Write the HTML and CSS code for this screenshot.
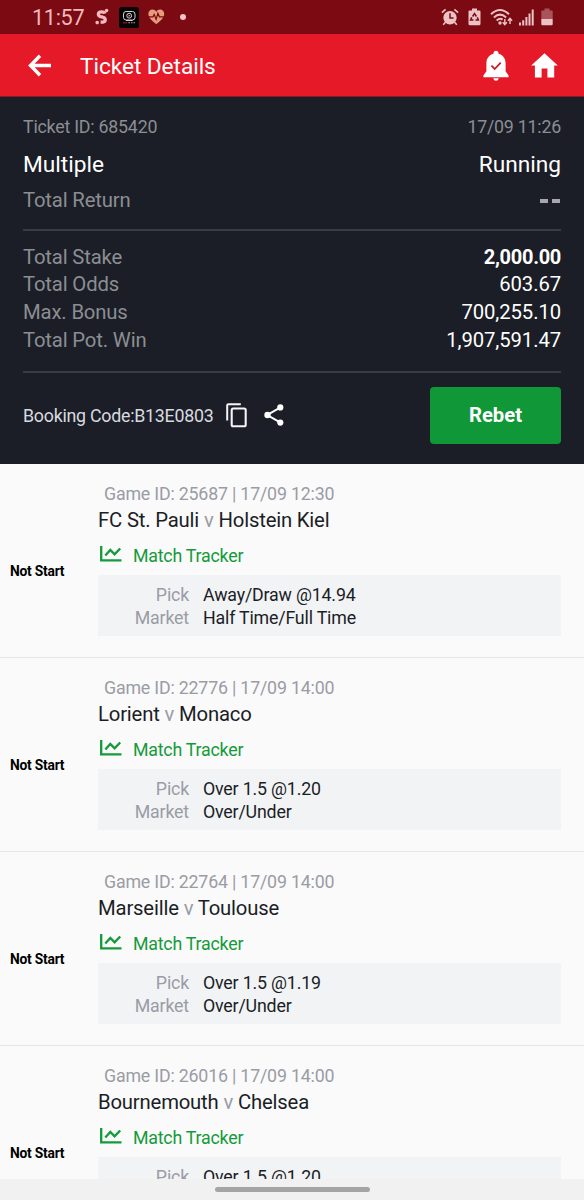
FILE: index.html
```html
<!DOCTYPE html>
<html lang="en">
<head>
<meta charset="utf-8">
<title>Ticket Details</title>
<link rel="stylesheet" href="styles.css">
</head>
<body>
<div class="phone">
  <div class="status">
    <div class="status-left">
      <span class="clock">11:57</span>
      <svg class="i-s" width="14" height="18" viewBox="0 0 14 18"><path d="M9.800 5.600Q9.300 3.900 6.800 3.900 3.300 3.900 3.300 6.200 3.300 8.200 6.800 8.900 10.300 9.600 10.300 11.900 10.300 14.200 5.600 14.200" fill="none" stroke="#f4b9bd" stroke-width="3.200"/><circle cx="11.600" cy="2.600" r="1.800" fill="#f4b9bd"/><circle cx="2.200" cy="14.600" r="1.800" fill="#f4b9bd"/></svg>
      <svg class="i-app" width="20" height="21" viewBox="0 0 20 21"><rect width="20" height="21" rx="2.5" fill="#080405"/><rect x="4.5" y="4.5" width="11.5" height="8.5" rx="2.6" fill="none" stroke="#d5d2d4" stroke-width="1"/><circle cx="10.2" cy="8.7" r="2.4" fill="none" stroke="#d5d2d4" stroke-width="1"/><path d="M9.6 7.7l1.9 1-1.9 1zM7 13h6.6v1H7z" fill="#d5d2d4"/><path d="M3.8 15.8h4.5" stroke="#8c1c25" stroke-width="1.2"/><path d="M9.3 15.8h7" stroke="#aaa" stroke-width="1.1" stroke-dasharray="1.6 1"/></svg>
      <svg class="i-heart" width="17" height="16" viewBox="0 0 17 16"><path d="M8.3 15.2C4.8 12 .4 8.8.4 4.9.4 2.4 2.2.6 4.5.6c1.6 0 3 .8 3.8 2.1C9.100 1.400 10.500.6 12.100.6c2.300 0 4.100 1.800 4.100 4.300 0 3.900-4.400 7.100-7.900 10.300z" fill="#e39c7c"/><path d="M.8 7.800H5l1.200-2.400 1.900 5 1.800-6.200 1.500 3.600h4.400" fill="none" stroke="#7b0a12" stroke-width="1.200"/></svg>
      <span class="dot"></span>
    </div>
    <div class="status-right">
      <svg width="18" height="18" viewBox="0 0 18 18"><circle cx="9" cy="9.700" r="6.700" fill="#edc2c5"/><path d="M.9 4.700L4.600 1.300M17.100 4.700l-3.700-3.400M4.400 14.200l-2.200 2.600M13.600 14.200l2.200 2.600" stroke="#edc2c5" stroke-width="1.600"/><path d="M9 5.300v4.800h3.500" fill="none" stroke="#7b0a12" stroke-width="1.500"/></svg>
      <svg width="13" height="18" viewBox="0 0 13 18"><path d="M4 .6h5V2.500h2.400Q12.500 2.500 12.500 3.600V16.100Q12.500 17.200 11.400 17.200H1.600Q.5 17.200.5 16.100V3.600Q.5 2.500 1.600 2.500H4z" fill="#edc2c5"/><path d="M4.600 8.500L6.500 5.600 8.400 8.500M9.300 9.300l1.100 2.800H7.500M5.500 12.100H2.600L3.700 9.300" fill="none" stroke="#7b0a12" stroke-width="1.500"/></svg>
      <svg width="23" height="19" viewBox="0 0 23 19"><g fill="none" stroke="#edc2c5" stroke-width="2"><path d="M1 6.200Q10 -2.300 19 6.200"/><path d="M3.900 9.400Q10 3.800 16.100 9.400"/><path d="M6.700 12.400Q10 9.600 12.600 11.600"/></g><circle cx="10" cy="15" r="1.700" fill="#edc2c5"/><path d="M14.800 11v5.500M12.700 14.300l2.100 2.300 2.100-2.300M20 16V10.500M17.900 12.700L20 10.400l2.100 2.300" fill="none" stroke="#edc2c5" stroke-width="1.400"/></svg>
      <svg width="15" height="17" viewBox="0 0 15 17"><path d="M0 13.500h2V16.500H0zM3.200 11.200h2v5.300h-2zM6.400 8h2v8.500h-2zM9.500 4.400h2v12.100h-2zM12.700.5h2v16h-2z" fill="#edc2c5"/></svg>
      <svg width="12" height="18" viewBox="0 0 12 18"><path d="M3.500.6h5V2.500h2.300q.9 0 .9.900V11H.3V3.400q0-.9.900-.9h2.300z" fill="#a8545a"/><path d="M.3 11h11.400v5.200q0 1-1 1H1.300q-1 0-1-1z" fill="#edc2c5"/></svg>
    </div>
  </div>

  <header class="appbar">
    <svg class="back" width="24" height="23" viewBox="0 0 24 23"><path d="M23 11.500H3M12 1.800L2.500 11.500l9.500 9.700" fill="none" stroke="#fff" stroke-width="3.400"/></svg>
    <h1 class="title">Ticket Details</h1>
    <svg class="bell" width="26" height="31" viewBox="0 0 26 31"><path d="M13 .8c1.500 0 2.500 1 2.500 2.500v.5c4.500 1.100 7.100 4.800 7.100 9.400v8.100l3 4.100v1.800H.4v-1.800l3-4.100v-8.100c0-4.600 2.600-8.300 7.100-9.400v-.5C10.500 1.800 11.500.8 13 .8z" fill="#fff"/><path d="M10.200 28.200h5.600q-.6 2.500-2.800 2.500t-2.800-2.500z" fill="#fff"/><path d="M8.400 15.700l3.300 3.300 6-6.300" fill="none" stroke="#c81e2b" stroke-width="1.800"/></svg>
    <svg class="home" width="27" height="25" viewBox="0 0 27 25"><path d="M13.500.3L26.800 12.600h-3.600V24.600h-6.800v-9.200h-5.800v9.200H3.900V12.600H.2z" fill="#fff"/></svg>
  </header>

  <section class="summary">
    <div class="row row-id"><span>Ticket ID: 685420</span><span>17/09 11:26</span></div>
    <div class="row row-type"><span>Multiple</span><span>Running</span></div>
    <div class="row row-return"><span>Total Return</span><span class="dashes"><i></i><i></i></span></div>
    <div class="totals">
      <div class="row"><span>Total Stake</span><b class="stake">2,000.00</b></div>
      <div class="row"><span>Total Odds</span><b>603.67</b></div>
      <div class="row"><span>Max. Bonus</span><b>700,255.10</b></div>
      <div class="row"><span>Total Pot. Win</span><b>1,907,591.47</b></div>
    </div>
    <div class="booking">
      <span class="code">Booking Code:B13E0803</span>
      <svg class="copy" width="21" height="25" viewBox="0 0 21 25"><path d="M1.200 17.500V2.400Q1.200 1.200 2.400 1.200H14.800" fill="none" stroke="#f4f4f6" stroke-width="2"/><rect x="5.700" y="5.500" width="14" height="17.800" rx="1.600" fill="none" stroke="#f4f4f6" stroke-width="2.100"/></svg>
      <svg class="share" width="20" height="22" viewBox="0 0 20 22"><path d="M16.500 3.400L3.300 11l13.200 7.600" fill="none" stroke="#fff" stroke-width="2"/><g fill="#fff"><circle cx="16.300" cy="3.400" r="3.100"/><circle cx="3.500" cy="11" r="3.200"/><circle cx="16.300" cy="18.600" r="3.100"/></g></svg>
      <button class="rebet">Rebet</button>
    </div>
  </section>

  <main class="games">
    <article class="game">
      <div class="state">Not Start</div>
      <div class="info">
        <div class="gid">Game ID: 25687 | 17/09 12:30</div>
        <div class="teams">FC St. Pauli <em>v</em> Holstein Kiel</div>
        <div class="tracker"><svg width="22" height="16" viewBox="0 0 22 16"><path d="M1.200 0v14.300H21.500M5.300 9.500l5-5.500 4.300 4.400 5.600-5.900" fill="none" stroke="#149a3b" stroke-width="2.300"/></svg><span>Match Tracker</span></div>
        <dl class="pick"><dt>Pick</dt><dd>Away/Draw @14.94</dd><dt>Market</dt><dd>Half Time/Full Time</dd></dl>
      </div>
    </article>
    <article class="game">
      <div class="state">Not Start</div>
      <div class="info">
        <div class="gid">Game ID: 22776 | 17/09 14:00</div>
        <div class="teams">Lorient <em>v</em> Monaco</div>
        <div class="tracker"><svg width="22" height="16" viewBox="0 0 22 16"><path d="M1.200 0v14.300H21.500M5.300 9.500l5-5.500 4.300 4.400 5.600-5.900" fill="none" stroke="#149a3b" stroke-width="2.300"/></svg><span>Match Tracker</span></div>
        <dl class="pick"><dt>Pick</dt><dd>Over 1.5 @1.20</dd><dt>Market</dt><dd>Over/Under</dd></dl>
      </div>
    </article>
    <article class="game">
      <div class="state">Not Start</div>
      <div class="info">
        <div class="gid">Game ID: 22764 | 17/09 14:00</div>
        <div class="teams">Marseille <em>v</em> Toulouse</div>
        <div class="tracker"><svg width="22" height="16" viewBox="0 0 22 16"><path d="M1.200 0v14.300H21.500M5.300 9.500l5-5.500 4.300 4.400 5.600-5.900" fill="none" stroke="#149a3b" stroke-width="2.300"/></svg><span>Match Tracker</span></div>
        <dl class="pick"><dt>Pick</dt><dd>Over 1.5 @1.19</dd><dt>Market</dt><dd>Over/Under</dd></dl>
      </div>
    </article>
    <article class="game">
      <div class="state">Not Start</div>
      <div class="info">
        <div class="gid">Game ID: 26016 | 17/09 14:00</div>
        <div class="teams">Bournemouth <em>v</em> Chelsea</div>
        <div class="tracker"><svg width="22" height="16" viewBox="0 0 22 16"><path d="M1.200 0v14.300H21.500M5.300 9.500l5-5.500 4.300 4.400 5.600-5.900" fill="none" stroke="#149a3b" stroke-width="2.300"/></svg><span>Match Tracker</span></div>
        <dl class="pick"><dt>Pick</dt><dd>Over 1.5 @1.20</dd></dl>
      </div>
    </article>
  </main>
  <div class="navbar"><span class="handle"></span></div>
</div>
</body>
</html>
```
FILE: styles.css
```css
* { box-sizing: border-box; }
body { margin: 0; font-family: Roboto, "Liberation Sans", sans-serif; }
.phone { width: 584px; height: 1200px; display: flex; flex-direction: column; overflow: hidden; background: #fafafa; }

.status { height: 34px; flex: none; background: #7b0a12; display: flex; justify-content: space-between; padding: 0 31px 0 32px; }
.status-left, .status-right { display: flex; align-items: center; }
.clock { font-size: 21.6px; letter-spacing: -0.3px; line-height: 34px; padding-top: 1px; color: #f4b9bd; width: 64px; }
.i-s { margin-left: -1px; }
.i-app { margin-left: 10px; }
.i-heart { margin-left: 9px; }
.dot { width: 6px; height: 6px; border-radius: 50%; background: #f4c3c6; margin-left: 15px; }
.status-right { gap: 9px; }
.status-right svg:nth-child(4) { margin-left: -3px; }
.status-right svg:nth-child(5) { margin-left: -2px; }

.appbar { height: 63px; flex: none; background: #e51928; border-bottom: 1px solid #8c1a22; display: flex; align-items: center; padding: 0 26px 0 28px; }
.title { margin: 0 auto 0 28px; padding-top: 2px; font-weight: 400; font-size: 22.7px; letter-spacing: -0.07px; color: #fff; }
.home { margin-left: 22px; }

.summary { height: 367px; flex: none; background: #1b1e26; padding: 16px 23px 0; color: #8b8e93; }
.row { display: flex; justify-content: space-between; align-items: center; }
.row-id { height: 26px; font-size: 17.8px; letter-spacing: -0.22px; }
.row-type { height: 51px; font-size: 22.7px; color: #fff; }
.row-return { height: 39px; padding-bottom: 19px; font-size: 20.3px; letter-spacing: -0.16px; }
.dashes { display: flex; gap: 4px; padding: 2px 1px 0 0; }
.dashes i { width: 8px; height: 4px; background: #a5a7ad; }
.totals { border-top: 2px solid #393c44; border-bottom: 2px solid #393c44; height: 144px; padding-top: 12px; font-size: 20.3px; letter-spacing: -0.16px; }
.totals .row { height: 27.6px; }
.totals b { font-weight: 400; letter-spacing: -0.1px; color: #fff; }
.totals .stake { font-weight: 700; font-size: 20px; letter-spacing: -0.3px; }
.booking { display: flex; align-items: center; height: 84px; color: #d8dae0; }
.code { font-size: 17.8px; letter-spacing: -0.24px; width: 203px; }
.share { margin-left: 17px; }
.rebet { margin-left: auto; width: 131px; height: 57px; border: 0; border-radius: 4px; background: #109738; color: #fff; font: 700 20.3px Roboto, sans-serif; padding: 0; }

.games { flex: 1; min-height: 0; overflow: hidden; }
.game { height: 194px; border-bottom: 1px solid #e6e6e8; display: flex; padding: 18px 23px 0 10px; }
.state { width: 88px; flex: none; font-size: 13.8px; letter-spacing: -0.22px; font-weight: 700; line-height: 20px; padding-top: 79px; color: #000; }
.info { flex: 1; }
.gid { padding-left: 6px; font-size: 17.8px; letter-spacing: -0.19px; line-height: 24px; color: #9a9ca5; }
.teams { font-size: 20.3px; letter-spacing: -0.18px; line-height: 27px; padding-top: 1px; color: #1b1e26; white-space: nowrap; }
.teams em { font-style: normal; color: #9a9ca5; }
.tracker { display: flex; align-items: center; height: 26px; margin-top: 8px; color: #149a3b; font-size: 17.8px; letter-spacing: -0.22px; padding-left: 2px; }
.tracker svg { margin: -2px 11px 0 0; }
.pick { margin: 7px 0 0; background: #f2f3f5; height: 61px; padding-top: 8px; display: grid; grid-template-columns: 91px 1fr; grid-auto-rows: 23.400px; column-gap: 14px; align-content: start; font-size: 17.8px; letter-spacing: -0.18px; line-height: 23.400px; }
.pick dt { text-align: right; color: #9a9ca5; }
.pick dd { margin: 0; color: #1b1e26; }

.navbar { height: 21px; flex: none; background: #f1f1f1; display: flex; justify-content: center; align-items: center; }
.handle { width: 155px; height: 5px; border-radius: 3px; background: #a5a5a5; }
```
